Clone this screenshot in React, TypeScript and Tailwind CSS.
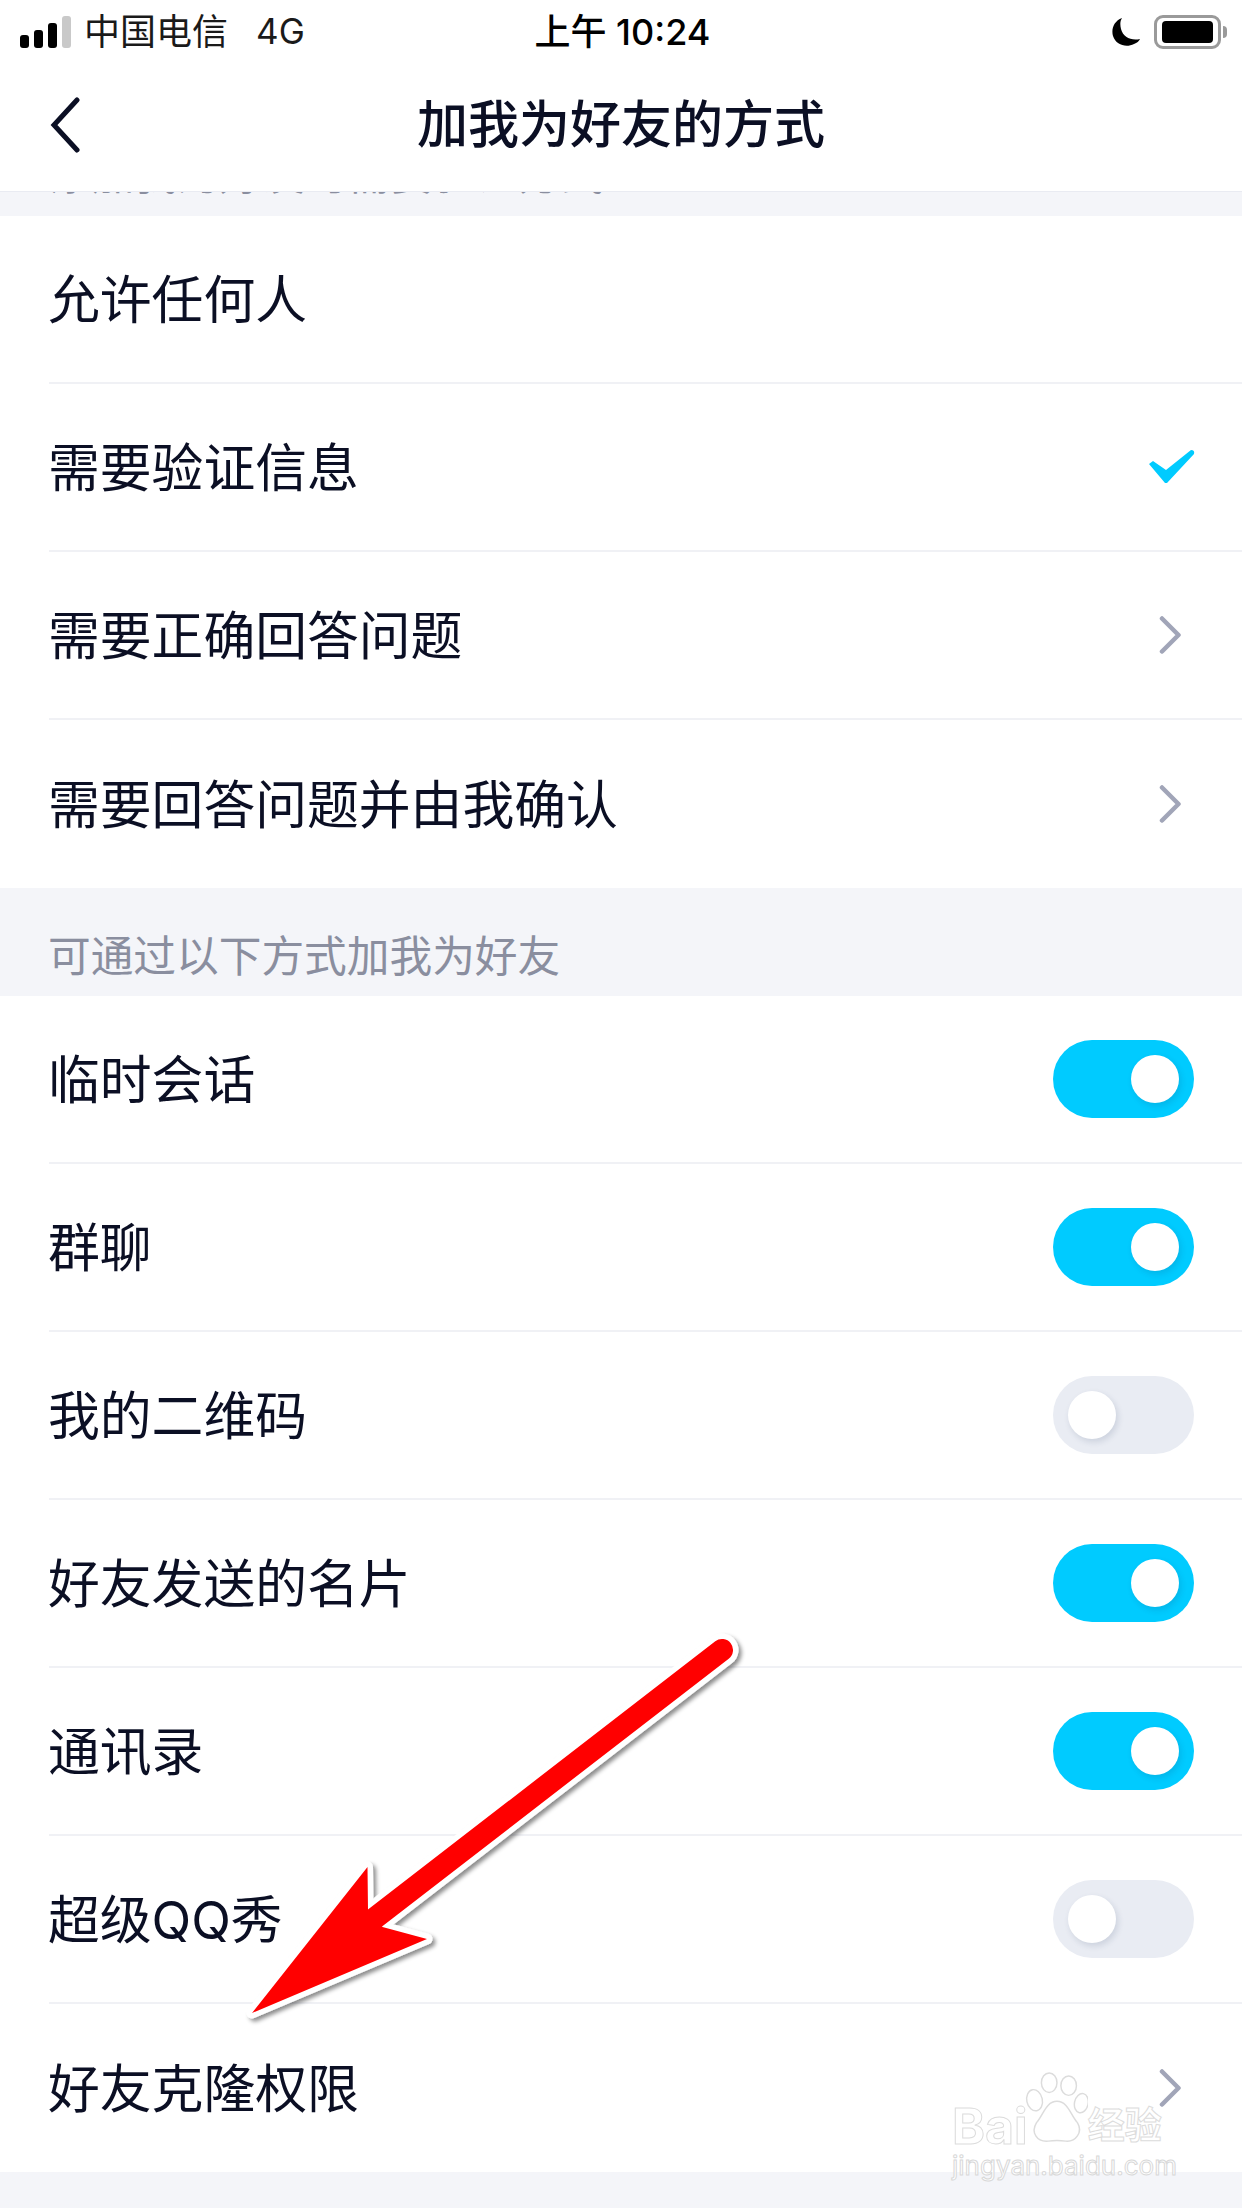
const font = "font-['Inter','Noto_Sans_CJK_SC',sans-serif]";

const rowsTop = [
  { label: "允许任何人" },
  { label: "需要验证信息", right: "check" },
  { label: "需要正确回答问题", right: "chevron" },
  { label: "需要回答问题并由我确认", right: "chevron" },
];

const rowsBottom = [
  { label: "临时会话", right: "on" },
  { label: "群聊", right: "on" },
  { label: "我的二维码", right: "off" },
  { label: "好友发送的名片", right: "on" },
  { label: "通讯录", right: "on" },
  { label: "超级QQ秀", right: "off" },
  { label: "好友克隆权限", right: "chevron" },
];

const Chevron = () => (
  <svg width="24" height="40" viewBox="0 0 24 40" className="mr-[11px]" fill="none">
    <path d="M3 3.5 L19.5 20 L3 36.5" stroke="#a1a5b8" strokeWidth="4.5" strokeLinecap="round" strokeLinejoin="round" />
  </svg>
);

const Check = () => (
  <svg width="46" height="34" viewBox="0 0 46 34" className="-mr-px">
    <path d="M0 14 L4 11 L17 20 L42 0 Q46 0 45 4 L18 33 L16 33 Z" fill="#00cbff" />
  </svg>
);

const Toggle = ({ on }: { on: boolean }) => (
  <div className={`flex h-[78px] w-[141px] items-center rounded-full px-[15px] ${on ? "justify-end bg-[#00cbff]" : "justify-start bg-[#e9ecf3]"}`}>
    <div className="h-[48px] w-[48px] rounded-full bg-white shadow-[2px_3px_6px_rgba(30,50,90,0.14)]"></div>
  </div>
);

const Row = ({ label, right, last }: { label: string; right?: string; last?: boolean }) => (
  <div className="flex h-[168px] pl-[49px]">
    <div className={`flex flex-1 items-center justify-between pr-[48px] ${last ? "" : "border-b-2 border-[#f0f1f5]"}`}>
      <span className="-ml-px mt-[3px] text-[51.8px] leading-none text-[#0b0f24]">{label}</span>
      {right === "check" && <Check />}
      {right === "chevron" && <Chevron />}
      {right === "on" && <Toggle on />}
      {right === "off" && <Toggle on={false} />}
    </div>
  </div>
);

const StatusBar = () => (
  <div className="flex h-[60px] items-center justify-between pl-[20px] pr-[15px] pt-[3px]">
    <div className="flex w-[320px] items-center">
      <div className="flex items-end gap-[5px]">
        <div className="h-[13px] w-[9px] rounded-[3px] bg-black"></div>
        <div className="h-[18px] w-[9px] rounded-[3px] bg-black"></div>
        <div className="h-[25px] w-[9px] rounded-[3px] bg-black"></div>
        <div className="h-[32px] w-[9px] rounded-[3px] bg-[#c9c9c9]"></div>
      </div>
      <span className="ml-[13px] text-[36px] leading-none text-[#1a1a1a]">中国电信</span>
      <span className="ml-[28px] text-[35px] leading-none text-[#1a1a1a]">4G</span>
    </div>
    <span className="-ml-[2px] text-[36px] font-medium leading-none text-black">上午 10:24</span>
    <div className="flex w-[320px] items-center justify-end">
      <svg width="30" height="30" viewBox="0 0 30 30" className="mr-[13px]">
        <path d="M11 1 C3 4 0 12 2 19 C5 28 15 31 23 27 C26 26 28 24 29 22 C20 24 12 20 10 12 C9 8 9 4 11 1 Z" fill="#000" />
      </svg>
      <div className="flex h-[34px] w-[67px] items-center justify-center rounded-[9px] border-[3px] border-[#9a9a9a]">
        <div className="h-[22px] w-[51px] rounded-[4px] bg-black"></div>
      </div>
      <div className="ml-[2px] h-[12px] w-[4px] rounded-r-full bg-[#9a9a9a]"></div>
    </div>
  </div>
);

const NavBar = () => (
  <div className="relative flex h-[132px] items-center justify-center border-b border-[#e9ebf2] bg-white pb-[2px]">
    <svg width="34" height="56" viewBox="0 0 34 56" className="absolute left-[48px] top-[37px]" fill="none">
      <path d="M29 3 L6 28 L29 53" stroke="#0b0f24" strokeWidth="5" strokeLinecap="round" strokeLinejoin="miter" />
    </svg>
    <span className="text-[51px] font-medium leading-none text-[#0b0f24]">加我为好友的方式</span>
  </div>
);

const Arrow = () => (
  <svg width="540" height="420" viewBox="0 0 540 420" className="absolute left-[220px] top-[1630px]" fill="none">
    <defs>
      <filter id="arrowShadow" x="-10%" y="-10%" width="120%" height="120%">
        <feDropShadow dx="3" dy="3" stdDeviation="2" floodColor="#000" floodOpacity="0.45" />
      </filter>
    </defs>
    <g filter="url(#arrowShadow)">
      <path d="M502 20 L155 288" stroke="#fff" strokeWidth="33" strokeLinecap="round" />
      <path d="M32 383 L147.5 237 L148 280 L162.5 297 L207 309 Z" fill="#fff" stroke="#fff" strokeWidth="11" strokeLinejoin="round" />
    </g>
    <path d="M502 20 L155 288" stroke="#ff0000" strokeWidth="22" strokeLinecap="round" />
    <path d="M32 383 L147.5 237 L148 280 L162.5 297 L207 309 Z" fill="#ff0000" />
  </svg>
);

const Watermark = () => (
  <div className="absolute left-[952px] top-[2072px] w-[226px] select-none">
    <div className="flex h-[74px] items-end">
      <span className="text-[50px] font-bold leading-[40px] text-white [-webkit-text-stroke:1px_#dcdcdc]">Bai</span>
      <svg width="64" height="74" viewBox="0 0 64 76" className="mx-[-4px]" fill="#fff" stroke="#dcdcdc" strokeWidth="1.5">
        <ellipse cx="10" cy="29" rx="8" ry="11" transform="rotate(-12 10 29)" />
        <ellipse cx="25" cy="11" rx="8" ry="10" />
        <ellipse cx="45" cy="14" rx="8" ry="10" />
        <ellipse cx="58" cy="32" rx="7" ry="10" transform="rotate(12 58 32)" />
        <path d="M33 30 C44 30 47 44 54 52 C60 62 52 72 42 71 C36 70 30 70 24 71 C12 72 6 62 12 52 C19 44 22 30 33 30 Z" />
      </svg>
      <span className="ml-[4px] text-[37px] font-bold leading-[40px] text-white [-webkit-text-stroke:1px_#dcdcdc]">经验</span>
    </div>
    <div className="mt-[6px] text-[26px] leading-[28px] text-white [-webkit-text-stroke:1px_#d8d8d8]">jingyan.baidu.com</div>
  </div>
);

export default function App() {
  return (
    <div className={`relative h-[2208px] w-[1242px] overflow-hidden bg-[#f4f5f9] ${font}`}>
      <div className="bg-white">
        <StatusBar />
        <NavBar />
      </div>

      {/* previous section title is scrolled under the nav bar */}
      <div className="h-[24px] overflow-hidden pl-[49px]">
        <div className="-mt-[38px] text-[42.7px] leading-[42px] text-[#8a8e9f]">添加我为好友时需要验证方式</div>
      </div>

      <div className="bg-white">
        {rowsTop.map((r, i) => (
          <Row key={r.label} label={r.label} right={r.right} last={i === rowsTop.length - 1} />
        ))}
      </div>

      <div className="flex h-[108px] items-end pb-[17px] pl-[49px]">
        <span className="-ml-px text-[42.7px] leading-none text-[#8a8e9f]">可通过以下方式加我为好友</span>
      </div>

      <div className="bg-white">
        {rowsBottom.map((r, i) => (
          <Row key={r.label} label={r.label} right={r.right} last={i === rowsBottom.length - 1} />
        ))}
      </div>

      <Arrow />
      <Watermark />
    </div>
  );
}
